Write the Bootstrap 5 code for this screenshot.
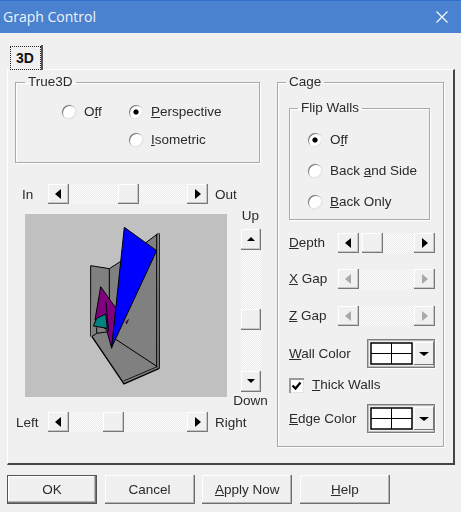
<!DOCTYPE html>
<html lang="en">
<head>
<meta charset="utf-8">
<title>Graph Control</title>
<link href="https://cdn.jsdelivr.net/npm/bootstrap@5.3.0/dist/css/bootstrap.min.css" rel="stylesheet">
<style>
html,body{height:100%;overflow:hidden}
body{background:#f0f0f0;color:#2a2a2a;font-family:"Liberation Sans",Arial,sans-serif;font-size:13.5px;line-height:16px}
.dlg{width:461px;height:512px;filter:blur(.3px)}
.titlebar{height:33px;background:#4a82cf;border-top:1px solid #2f6fd0;padding:0 13px 0 3px;font-family:"Open Sans","Liberation Sans",sans-serif;font-size:14px;color:#eef3fb}
.tabrow{padding:12px 0 0 9px;position:relative;z-index:1}
.tab3d{width:34px;height:25px;margin-bottom:-1px;padding:0;display:flex;align-items:center;justify-content:center;background:#f0f0f0;border-right:2px solid #555;font-weight:700;font-size:14px;color:#111;position:relative}
.tab3d::after{content:"";position:absolute;left:1px;right:0;top:1px;bottom:0;border:1px dotted #222}
.tabpanel{width:448px;height:396px;margin-left:7px;border-top:1px solid #fff;border-left:1px solid #fff;border-right:2px solid #444;border-bottom:2px solid #444;padding:4px 0 0 7px;gap:17px}
.leftcol{width:245px;flex:none}
.rightcol{width:167px;flex:none}
fieldset.gbox{border:1px solid #a9a9a9;box-shadow:1px 1px 0 #fff,inset 1px 1px 0 #fff;margin:0}
fieldset.gbox>legend{float:none;width:auto;font-size:13.5px;line-height:16px;padding:0 3px;margin:0}
fieldset.g-true>legend{margin-left:-37px}
fieldset.g-cage>legend{margin-left:-3px}
fieldset.g-flip>legend{margin-left:-10px}
.g-true{height:89px;padding:13px 0 0 46px}
.g-cage{height:373px;padding:10px 7px 0 11px}
.g-flip{width:141px;height:120px;padding:15px 0 0 18px}
.radcol{width:67px}
.radrow{height:18px;margin:0;padding:0;display:flex;align-items:center;gap:8px;white-space:nowrap}
.radrow+.radrow{margin-top:10px}
.g-flip .radrow+.radrow{margin-top:13px}
.form-check-input.rd{width:14px;height:14px;margin:0;flex:none;border:0;border-radius:50%;background:#fff;box-shadow:inset 1px 1px 0 #7c7c7c,inset -1px -1px 0 #e4e4e4,0 0 0 .5px #e0e0e0}
.form-check-input.rd:checked{background:radial-gradient(circle,#000 0 2.2px,#fff 3px);box-shadow:inset 1px 1px 0 #7c7c7c,inset -1px -1px 0 #e4e4e4}
.form-check-input.ck{width:15px;height:15px;margin:0;flex:none;border:0;border-radius:0;box-shadow:inset 2px 2px 0 #9a9a9a,inset -1px -1px 0 #e4e4e4}
.form-check-input.ck:checked{background:#fff url("data:image/svg+xml,%3Csvg xmlns='http://www.w3.org/2000/svg' viewBox='0 0 15 15'%3E%3Cpath d='M3.5 7.5l3 3 5-6' fill='none' stroke='%23000' stroke-width='2.2'/%3E%3C/svg%3E") center/15px no-repeat}
.lblin{width:33px;flex:none;padding-top:1px}
.pad7{padding-left:7px}
.pad1{padding-left:1px}
.sbrow{height:20px}
.mt21{margin-top:21px}
.mt4{margin-top:4px}
.mt3{margin-top:3px}
.mt1{margin-top:1px}
.sbh{width:160px;height:20px;flex:none}
.lblout{margin-left:7px;padding-top:1px}
.sbtn{width:21px;height:20px;flex:none;display:flex;align-items:center;justify-content:center;background:#f0f0f0;box-shadow:inset -1px -1px 0 #777,inset -2px -2px 0 #c8c8c8,inset 1px 1px 0 #fff}
.sbv .sbtn{width:20px;height:21px}
.strack{flex:1 1 auto;background-color:#f3f3f3;background-image:repeating-conic-gradient(#fbfbfb 0 25%,#ececec 0 50%);background-size:2px 2px;display:flex}
.sthumb{width:21px;height:20px;background:#f0f0f0;box-shadow:inset -1px -1px 0 #777,inset -2px -2px 0 #c8c8c8,inset 1px 1px 0 #fff}
.t49{margin-left:49px}.t34{margin-left:34px}.t2{margin-left:3px}
.sbv{width:20px;height:163px;margin-top:5px}
.sbv .strack{flex-direction:column}
.sbv .sthumb{width:20px;height:21px;margin-top:59px}
.ar{display:block;width:0;height:0;border-style:solid;border-color:transparent}
.ar-l{border-width:5px 6px 5px 0;border-right-color:#000;margin-right:2px}
.ar-r{border-width:5px 0 5px 6px;border-left-color:#000;margin-left:1px}
.ar-u{border-width:0 4px 4px;border-bottom-color:#000;margin-bottom:1px}
.ar-d{border-width:4px 4px 0;border-top-color:#000;margin-bottom:1px}
.off .ar-l{border-right-color:#a8a8a8}.off .ar-r{border-left-color:#a8a8a8}
.chartrow{height:201px}
.chartbox{width:202px;height:183px;margin:6px 0 0 10px;background:#c0c0c0;flex:none}
.chartbox svg{display:block}
.vcol{width:35px;margin-left:6px;flex:none}
.lblw{width:49px;flex:none;white-space:nowrap}
.lblc{width:78px;flex:none;white-space:nowrap}
.sbc{width:97px;height:20px;flex:none}
.r13{margin-top:13px}.r16{margin-top:16px}.r17{margin-top:17px}.r11{margin-top:11px}
.colorsel{width:68px;height:29px;flex:none;padding:3px 2px 3px 3px;gap:1px;box-shadow:inset 0 0 0 1px #7d7d7d,inset 0 0 0 2px #bbb,1px 1px 0 #fff}
.swatch{width:43px;height:23px;flex:none}
.ddb{width:20px;flex:none;display:flex;align-items:center;justify-content:center;background:#f0f0f0;box-shadow:inset -1px -1px 0 #777,inset 1px 1px 0 #fff}
.ddb .ar-d{border-width:4px 5px 0;margin:0}
.ckrow{height:16px;gap:8px;margin:9px 0 0;padding:0}
.btnrow{padding:10px 0 0 7px;gap:7.6px}
.btn.wbtn{width:90px;height:29px;padding:0;border:0;border-radius:0;background:#f0f0f0;color:#2a2a2a;font-size:13.5px;line-height:29px;box-shadow:inset -1px -1px 0 #6e6e6e,inset -2px -2px 0 #b5b5b5,inset 1px 1px 0 #fff}
.btn.wbtn.dflt{box-shadow:inset 0 0 0 1px #555,inset -2px -2px 0 #777,inset -3px -3px 0 #b5b5b5,inset 2px 2px 0 #fff}
</style>
</head>
<body>
<div class="dlg d-flex flex-column">
  <div class="titlebar d-flex align-items-center justify-content-between flex-none">
    <span>Graph Control</span>
    <svg width="12" height="12" viewBox="0 0 12 12" aria-label="Close"><path d="M.5.5l11 11M11.5.5l-11 11" stroke="#fff" stroke-width="1.1" fill="none"/></svg>
  </div>

  <ul class="nav tabrow"><li class="nav-item"><a class="nav-link tab3d">3D</a></li></ul>

  <div class="tabpanel d-flex">
    <div class="leftcol">
      <fieldset class="gbox g-true">
        <legend>True3D</legend>
        <div class="d-flex">
          <div class="radcol"><label class="radrow"><input class="form-check-input rd" type="radio" name="t3"><span>O<u>f</u>f</span></label></div>
          <div>
            <label class="radrow"><input class="form-check-input rd" type="radio" name="t3" checked><span><u>P</u>erspective</span></label>
            <label class="radrow"><input class="form-check-input rd" type="radio" name="t3"><span><u>I</u>sometric</span></label>
          </div>
        </div>
      </fieldset>

      <div class="d-flex align-items-center sbrow mt21">
        <div class="lblin pad7">In</div>
        <div class="sbh d-flex">
          <div class="sbtn"><i class="ar ar-l"></i></div>
          <div class="strack"><div class="sthumb t49"></div></div>
          <div class="sbtn"><i class="ar ar-r"></i></div>
        </div>
        <div class="lblout">Out</div>
      </div>

      <div class="d-flex chartrow mt4">
        <div class="chartbox">
          <svg width="202" height="183" viewBox="0 0 202 183">
            <g transform="translate(35 6) scale(.3333)" stroke="#000" stroke-linejoin="round">
              <polygon points="92,137 148,146 182,124 190,95 255,70 295,40 299,445 193,492 95,350" fill="#808080" stroke="none"/>
              <polyline points="92,350 92,137 148,146 182,124" fill="none" stroke-width="3"/>
              <path d="M148,146V340M255,70L295,40M290,42V440M298,40V445" fill="none" stroke-width="3"/>
              <path d="M95,350L110,340L148,335L152,345M110,340V322M155,350L292,440" fill="none" stroke-width="3"/>
              <path d="M96,350L192,492L298,445" fill="none" stroke-width="4"/>
              <path d="M191,483L292,440" fill="none" stroke="#000" stroke-width="2.5"/>
              <polygon points="197,306 206,298 200,312" fill="#800080" stroke-width="1.5"/>
              <polygon points="122,200 168,265 155,385 140,330 105,300" fill="#800080" stroke-width="3"/>
              <path d="M138,245L146,335" fill="none" stroke-width="3"/>
              <polygon points="100,318 110,295 137,282 142,325" fill="#008080" stroke-width="3"/>
              <polygon points="193,22 290,92 155,382" fill="#0000ff" stroke-width="3"/>
            </g>
          </svg>
        </div>
        <div class="vcol d-flex flex-column align-items-center">
          <div>Up</div>
          <div class="sbv d-flex flex-column">
            <div class="sbtn"><i class="ar ar-u"></i></div>
            <div class="strack"><div class="sthumb"></div></div>
            <div class="sbtn"><i class="ar ar-d"></i></div>
          </div>
          <div class="mt1">Down</div>
        </div>
      </div>

      <div class="d-flex align-items-center sbrow mt3">
        <div class="lblin pad1">Left</div>
        <div class="sbh d-flex">
          <div class="sbtn"><i class="ar ar-l"></i></div>
          <div class="strack"><div class="sthumb t34"></div></div>
          <div class="sbtn"><i class="ar ar-r"></i></div>
        </div>
        <div class="lblout">Right</div>
      </div>
    </div>

    <div class="rightcol">
      <fieldset class="gbox g-cage">
        <legend>Cage</legend>
        <fieldset class="gbox g-flip">
          <legend>Flip Walls</legend>
          <label class="radrow"><input class="form-check-input rd" type="radio" name="fw" checked><span>O<u>f</u>f</span></label>
          <label class="radrow"><input class="form-check-input rd" type="radio" name="fw"><span>Back <u>a</u>nd Side</span></label>
          <label class="radrow"><input class="form-check-input rd" type="radio" name="fw"><span><u>B</u>ack Only</span></label>
        </fieldset>

        <div class="d-flex align-items-center sbrow r13">
          <div class="lblw"><u>D</u>epth</div>
          <div class="sbc d-flex">
            <div class="sbtn"><i class="ar ar-l"></i></div>
            <div class="strack"><div class="sthumb t2"></div></div>
            <div class="sbtn"><i class="ar ar-r"></i></div>
          </div>
        </div>
        <div class="d-flex align-items-center sbrow r16">
          <div class="lblw"><u>X</u> Gap</div>
          <div class="sbc d-flex off">
            <div class="sbtn"><i class="ar ar-l"></i></div>
            <div class="strack"></div>
            <div class="sbtn"><i class="ar ar-r"></i></div>
          </div>
        </div>
        <div class="d-flex align-items-center sbrow r17">
          <div class="lblw"><u>Z</u> Gap</div>
          <div class="sbc d-flex off">
            <div class="sbtn"><i class="ar ar-l"></i></div>
            <div class="strack"></div>
            <div class="sbtn"><i class="ar ar-r"></i></div>
          </div>
        </div>

        <div class="d-flex align-items-center r13">
          <div class="lblc"><u>W</u>all Color</div>
          <div class="colorsel d-flex">
            <svg class="swatch" viewBox="0 0 43 23"><rect x="1" y="1" width="41" height="21" fill="#fff" stroke="#000" stroke-width="1.5"/><path d="M1 11.5H42M21.5 1V22" stroke="#000" stroke-width="1"/></svg>
            <div class="ddb"><i class="ar ar-d"></i></div>
          </div>
        </div>

        <label class="d-flex align-items-center ckrow">
          <input class="form-check-input ck" type="checkbox" checked><span><u>T</u>hick Walls</span>
        </label>

        <div class="d-flex align-items-center r11">
          <div class="lblc"><u>E</u>dge Color</div>
          <div class="colorsel d-flex">
            <svg class="swatch" viewBox="0 0 43 23"><rect x="1" y="1" width="41" height="21" fill="#fff" stroke="#000" stroke-width="1.5"/><path d="M1 11.5H42M21.5 1V22" stroke="#000" stroke-width="1"/></svg>
            <div class="ddb"><i class="ar ar-d"></i></div>
          </div>
        </div>
      </fieldset>
    </div>
  </div>

  <div class="d-flex btnrow">
    <button class="btn wbtn dflt" type="button">OK</button>
    <button class="btn wbtn" type="button">Cancel</button>
    <button class="btn wbtn" type="button"><u>A</u>pply Now</button>
    <button class="btn wbtn" type="button"><u>H</u>elp</button>
  </div>
</div>
<script src="https://cdn.jsdelivr.net/npm/bootstrap@5.3.0/dist/js/bootstrap.bundle.min.js"></script>
</body>
</html>
